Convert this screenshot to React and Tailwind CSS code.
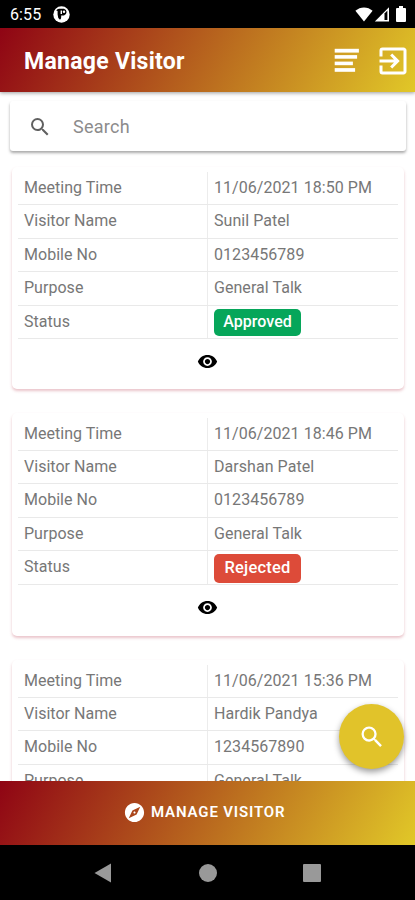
import React from "react";
import { MdSearch, MdExitToApp, MdVisibility, MdExplore } from "react-icons/md";

const visitors = [
  { time: "11/06/2021 18:50 PM", name: "Sunil Patel", mobile: "0123456789", status: "Approved" },
  { time: "11/06/2021 18:46 PM", name: "Darshan Patel", mobile: "0123456789", status: "Rejected" },
  { time: "11/06/2021 15:36 PM", name: "Hardik Pandya", mobile: "1234567890", status: "Approved" },
];

const gradient = "bg-[linear-gradient(120deg,#8f0414_0%,#e1c828_100%)]";

function StatusBar() {
  return (
    <div className="flex h-7 shrink-0 items-center bg-black pl-[10px] pr-2 text-white">
      <span className="pt-[2px] text-[16px] leading-7 tracking-[0.1px]">6:55</span>
      <svg className="ml-3 mt-px" width="17" height="17" viewBox="0 0 17 17">
        <circle cx="8.5" cy="8.5" r="8.2" fill="#fff" />
        <path d="M3.2 4.6Q4.2 3 6 2.8H11A3.4 3.4 0 0 1 11 9.4H8.2V11Q8.2 13 7 13.8Q4.6 12 4.6 8.6V4.9Z" fill="#000" />
        <path d="M7.6 4.4H9V8H7.6Z" fill="#fff" />
        <circle cx="11" cy="5.8" r="1.2" fill="#fff" />
      </svg>
      <svg className="ml-auto" width="18" height="15" viewBox="0 0 18 15">
        <path d="M0.4 3.8C5.2-.7 12.8-.7 17.6 3.8L9 14.6Z" fill="#fff" />
      </svg>
      <svg className="ml-[1px]" width="16" height="15" viewBox="0 0 16 15">
        <path d="M15 0.3V14.5H0.8Z" fill="#fff" />
        <path d="M10.5 6.5L13.4 3.5V13H10.5Z" fill="#000" />
      </svg>
      <svg className="ml-[6px] mr-px" width="10" height="16" viewBox="0 0 10 16">
        <path d="M3 0H7V2H9Q10 2 10 3V15Q10 16 9 16H1Q0 16 0 15V3Q0 2 1 2H3Z" fill="#fff" />
      </svg>
    </div>
  );
}

function Row({ label, tall, children }) {
  return (
    <div className={`flex border-b border-[#e9e9e9] ${tall ? "h-[34px]" : "h-[33.4px]"}`}>
      <div className="flex w-[190px] border-r border-[#ececec] pl-[6px] leading-[31px] tracking-[0.03px]">{label}</div>
      <div className="pl-[6px] leading-[31px] tracking-[0.05px]">{children}</div>
    </div>
  );
}

function VisitorCard({ visitor, tall }) {
  return (
    <div className={`shrink-0 rounded-[5px] bg-white px-[6px] pt-[5px] shadow-[0_2px_3px_rgba(190,70,90,0.32)] ${tall ? "h-[223.5px]" : "h-[222px]"}`}>
      <Row label="Meeting Time">{visitor.time}</Row>
      <Row label="Visitor Name">{visitor.name}</Row>
      <Row label="Mobile No">{visitor.mobile}</Row>
      <Row label="Purpose">General Talk</Row>
      <Row label="Status" tall={tall}>
        <span
          className={`flex w-[87px] items-center justify-center rounded-[5px] text-white ${
            visitor.status === "Approved"
              ? "mt-[3px] h-[27px] bg-[#06a65a] pb-[2px] text-[16px] font-medium"
              : "mt-[2.5px] h-[29px] bg-[#dd4b39] pb-px text-[16.5px] font-medium tracking-[0.2px]"
          }`}
        >
          {visitor.status}
        </span>
      </Row>
      <div className="flex justify-center pr-px pt-[12px]">
        <MdVisibility size={21} color="#000" />
      </div>
    </div>
  );
}

export default function App() {
  return (
    <div className="relative flex h-[900px] w-[415px] flex-col overflow-hidden bg-white font-['Roboto',sans-serif] text-[16px] text-[#777]">
      <StatusBar />
      <header className={`z-10 flex h-16 shrink-0 items-center pl-6 pr-1 text-white shadow-[0_1px_4px_rgba(0,0,0,0.4)] ${gradient}`}>
        <h1 className="pt-1 text-[23px] font-bold tracking-[0.28px]">Manage Visitor</h1>
        <svg className="ml-auto" width="25" height="24" viewBox="0 0 25 24" fill="#fff">
          <rect x="0.7" y="0.8" width="24.2" height="3.8" />
          <rect x="0.7" y="7.1" width="22.4" height="3.6" />
          <rect x="0.7" y="13.6" width="18.2" height="3.6" />
          <rect x="0.7" y="20.1" width="20.4" height="3.7" />
        </svg>
        <MdExitToApp className="ml-[16px] mt-px" size={36} />
      </header>
      <main className="flex min-h-0 flex-1 flex-col overflow-hidden">
        <div className="ml-[10px] mr-[9px] mt-[9px] flex h-[50px] shrink-0 items-center rounded-[3px] bg-white pl-[18px] pt-px shadow-[0_2px_3px_rgba(0,0,0,0.34)]">
          <MdSearch size={24} color="#606060" />
          <span className="ml-[21px] text-[18px] tracking-[0.25px] text-[#8c8c8c]">Search</span>
        </div>
        <div className="ml-3 mr-[11px] mt-4 flex flex-col gap-[23.5px]">
          {visitors.map((v, i) => (
            <VisitorCard key={i} visitor={v} tall={i === 1} />
          ))}
        </div>
      </main>
      <footer className={`flex h-16 shrink-0 items-center pb-px pl-[123px] text-white ${gradient}`}>
        <MdExplore size={23} />
        <span className="ml-[5px] text-[15px] font-semibold tracking-[0.85px]">MANAGE VISITOR</span>
      </footer>
      <nav className="flex h-[55px] shrink-0 items-center bg-black">
        <svg className="ml-[94px]" width="18" height="20" viewBox="0 0 18 20">
          <path d="M17 0.5V19.5L0.5 10Z" fill="#999" />
        </svg>
        <span className="ml-[87px] size-[18px] rounded-full bg-[#999]" />
        <span className="ml-[86px] size-[18px] rounded-[1px] bg-[#999]" />
      </nav>
      <button className="absolute left-[339px] top-[704px] z-20 flex size-[65px] items-center justify-center rounded-full bg-[#e1c32a] text-white shadow-[0_3px_6px_rgba(0,0,0,0.4)]">
        <MdSearch size={28} />
      </button>
    </div>
  );
}
